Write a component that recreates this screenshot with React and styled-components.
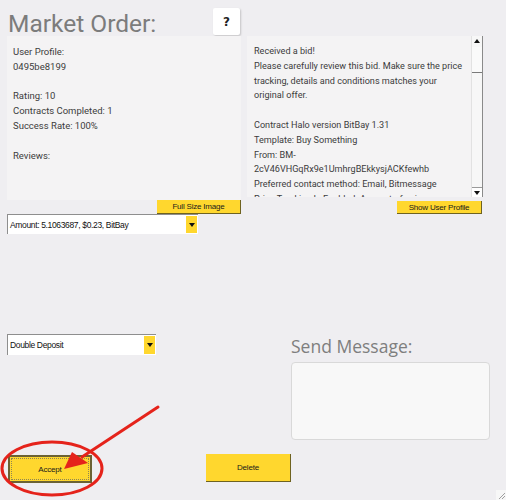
import React from "react";
import styled, { createGlobalStyle } from "styled-components";

const Global = createGlobalStyle`
  html, body { margin: 0; padding: 0; background: #efeef1; }
  * { box-sizing: border-box; }
`;

const Page = styled.div`
  position: relative;
  width: 506px;
  height: 500px;
  overflow: hidden;
  background: #efeef1;
  font-family: Roboto, "Liberation Sans", sans-serif;
  color: #3a3a3a;
`;

const Header = styled.div`
  display: flex;
  align-items: flex-start;
  height: 36px;
  padding-left: 8px;
`;

const Title = styled.h1`
  margin: 0;
  margin-top: 9px;
  width: 205px;
  font-family: Roboto, "Liberation Sans", sans-serif;
  font-weight: 400;
  font-size: 24.5px;
  line-height: 30px;
  color: #7c7c7c;
`;

const HelpButton = styled.button`
  margin-top: 8px;
  width: 27px;
  height: 27px;
  padding: 0;
  border: none;
  border-radius: 2px;
  background: #ffffff;
  box-shadow: 1px 1px 2px rgba(0, 0, 0, 0.18);
  font-family: "DejaVu Sans", sans-serif;
  font-weight: 700;
  font-size: 12px;
  color: #222;
`;

const TopRow = styled.div`
  display: flex;
  gap: 6px;
  padding-left: 7px;
`;

const Column = styled.div`
  display: flex;
  flex-direction: column;
  width: ${(p) => p.$w}px;
`;

const InfoPanel = styled.div`
  height: ${(p) => p.$h}px;
  background: #f4f3f4;
  display: flex;
  overflow: hidden;
`;

const PanelText = styled.div`
  flex: 1;
  padding: ${(p) => p.$pad};
  font-family: Roboto, "Liberation Sans", sans-serif;
  font-size: ${(p) => p.$fs || 9.5}px;
  line-height: 14.8px;
  color: #3c3c3c;
  white-space: pre-wrap;
  overflow-wrap: break-word;
  overflow: hidden;
`;

const Scrollbar = styled.div`
  width: 12px;
  display: flex;
  flex-direction: column;
  background: #f7f7f7;
  border-left: 1px solid #e2e2e2;
  border-right: 1px solid #8a8a8a;
`;

const ScrollArrow = styled.div`
  height: 10px;
  display: flex;
  align-items: center;
  justify-content: center;
  ${(p) => (p.$down ? "border-top: 1px solid #9a9a9a; background: #ffffff;" : "")}
`;

const Thumb = styled.div`
  height: 26px;
  margin-top: 1px;
  background: #fafafa;
  border-bottom: 1px solid #7a7a7a;
`;

const Track = styled.div`
  flex: 1;
`;

const YellowButton = styled.button`
  align-self: ${(p) => p.$align || "flex-start"};
  width: ${(p) => p.$w}px;
  height: ${(p) => p.$h}px;
  margin: ${(p) => p.$m || "0"};
  padding: 0;
  background: #ffd72e;
  border: none;
  border-right: 1px solid #6e6220;
  border-bottom: 1px solid #6e6220;
  font-family: "Liberation Sans", Roboto, sans-serif;
  font-size: 8px;
  letter-spacing: -0.2px;
  color: #1a1a1a;
  display: flex;
  align-items: center;
  justify-content: center;
  white-space: nowrap;
`;

const FocusButton = styled(YellowButton)`
  border: 2px solid #6b6234;
  outline: 1px dotted #8f8552;
  outline-offset: -4px;
`;

const Select = styled.div`
  display: flex;
  width: ${(p) => p.$w}px;
  height: ${(p) => p.$h}px;
  background: #ffffff;
  border-top: 1px solid #8e8e8e;
  border-left: 1px solid #8e8e8e;
`;

const SelectLabel = styled.div`
  flex: 1;
  padding-left: 2px;
  display: flex;
  align-items: center;
  font-family: "Liberation Sans", sans-serif;
  font-size: 8.5px;
  letter-spacing: -0.35px;
  color: #111;
  white-space: nowrap;
`;

const SelectArrow = styled.div`
  width: 11px;
  margin: 1px 1px 1px 0;
  background: #ffd72e;
  display: flex;
  align-items: center;
  justify-content: center;
`;

const MiddleRow = styled.div`
  display: flex;
  margin-top: 100px;
  padding-left: 7px;
`;

const MessageColumn = styled.div`
  display: flex;
  flex-direction: column;
  margin-left: 135px;
  width: 199px;
`;

const SubTitle = styled.div`
  margin-top: -1px;
  font-family: "Open Sans", Roboto, sans-serif;
  font-size: 17.5px;
  line-height: 26px;
  color: #7e7e7e;
`;

const MessageBox = styled.div`
  height: 78px;
  background: #f8f8f8;
  border: 1px solid #d9d9d9;
  border-radius: 4px;
  margin-top: 3px;
`;

const BottomRow = styled.div`
  display: flex;
  align-items: flex-start;
  margin-top: 14px;
  padding-left: 8px;
  gap: 114px;
`;

const Overlay = styled.svg`
  position: absolute;
  left: 0;
  top: 0;
  pointer-events: none;
`;

const Grip = styled.svg`
  position: absolute;
  right: 0;
  bottom: 0;
`;

const Tri = ({ down }) => (
  <svg width="6" height="4" viewBox="0 0 6 4">
    <path d={down ? "M0 0 L6 0 L3 4 Z" : "M0 4 L6 4 L3 0 Z"} fill="#111" />
  </svg>
);

const leftText = `User Profile:
0495be8199

Rating: 10
Contracts Completed: 1
Success Rate: 100%

Reviews:`;

const rightText = `Received a bid!
Please carefully review this bid. Make sure the price tracking, details and conditions matches your original offer.

Contract Halo version BitBay 1.31
Template: Buy Something
From: BM-2cV46VHGqRx9e1UmhrgBEkkysjACKfewhb
Preferred contact method: Email, Bitmessage
Price Tracking Is Enabled: Amount of coins may vary`;

export default function App() {
  return (
    <Page>
      <Global />
      <Header>
        <Title>Market Order:</Title>
        <HelpButton>?</HelpButton>
      </Header>
      <TopRow>
        <Column $w={234}>
          <InfoPanel $h={164}>
            <PanelText $pad="9px 6px">{leftText}</PanelText>
          </InfoPanel>
          <YellowButton $align="flex-end" $w={84} $h={14}>
            Full Size Image
          </YellowButton>
          <Select $w={191} $h={20}>
            <SelectLabel>Amount: 5.1063687, $0.23, BitBay</SelectLabel>
            <SelectArrow>
              <Tri down />
            </SelectArrow>
          </Select>
        </Column>
        <Column $w={236}>
          <InfoPanel $h={161}>
            <PanelText $pad="8px 5px 0 7px" $fs={9.1}>
              {rightText}
            </PanelText>
            <Scrollbar>
              <ScrollArrow>
                <Tri />
              </ScrollArrow>
              <Thumb />
              <Track />
              <ScrollArrow $down>
                <Tri down />
              </ScrollArrow>
            </Scrollbar>
          </InfoPanel>
          <YellowButton $align="flex-end" $w={85} $h={13} $m="4px 1px 0 0">
            Show User Profile
          </YellowButton>
        </Column>
      </TopRow>
      <MiddleRow>
        <Select $w={149} $h={21}>
          <SelectLabel>Double Deposit</SelectLabel>
          <SelectArrow>
            <Tri down />
          </SelectArrow>
        </Select>
        <MessageColumn>
          <SubTitle>Send Message:</SubTitle>
          <MessageBox />
        </MessageColumn>
      </MiddleRow>
      <BottomRow>
        <FocusButton $w={84} $h={28} $m="1px 0 0 0">
          Accept
        </FocusButton>
        <YellowButton $w={85} $h={28}>
          Delete
        </YellowButton>
      </BottomRow>
      <Overlay width="506" height="500" viewBox="0 0 506 500">
        <ellipse cx="52" cy="468.5" rx="50" ry="26.5" fill="none" stroke="#e5231b" strokeWidth="3" />
        <line x1="158" y1="407" x2="82" y2="457" stroke="#e5231b" strokeWidth="3" strokeLinecap="round" />
        <polygon points="64,469 72,452 88,463" fill="#e5231b" />
      </Overlay>
      <Grip width="10" height="10" viewBox="0 0 10 10">
        <rect width="10" height="10" fill="#f7f7f7" />
        <path d="M9 3 L3 9 M9 6 L6 9" stroke="#a0a0a0" strokeWidth="1" />
      </Grip>
    </Page>
  );
}
